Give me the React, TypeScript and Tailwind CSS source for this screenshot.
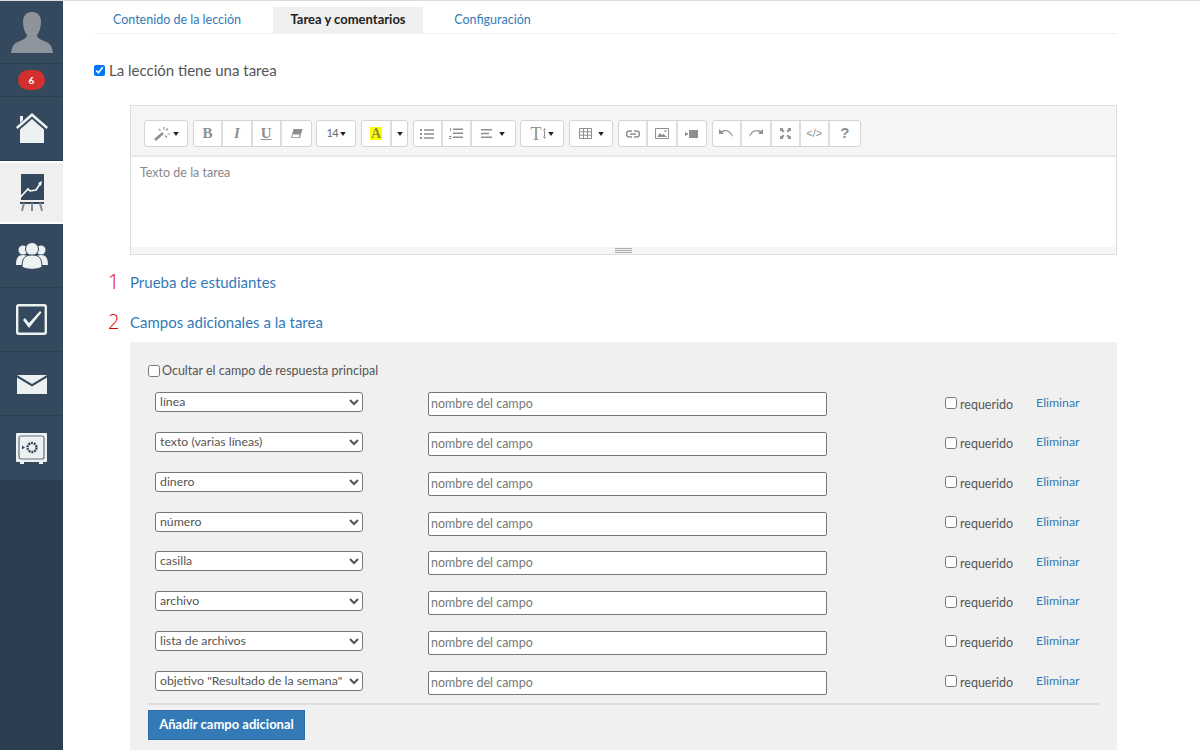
import React from "react";

const G = "#8f8f8f";

function Caret({ className = "" }: { className?: string }) {
  return (
    <svg width="6" height="4" viewBox="0 0 7 5" className={className}>
      <path d="M0 0h7L3.500 5z" fill="#222" />
    </svg>
  );
}

function Ico({ w = 16, h = 14, children }: { w?: number; h?: number; children: React.ReactNode }) {
  return (
    <svg width={w} height={h} viewBox={`0 0 ${w} ${h}`} fill={G} stroke="none">
      {children}
    </svg>
  );
}

function Btn({ w, children, last }: { w: number; children: React.ReactNode; last?: boolean }) {
  return (
    <div
      style={{ width: w }}
      className={`flex h-full items-center justify-center gap-[2px] ${last ? "" : "border-r-2 border-[#dedede]"}`}
    >
      {children}
    </div>
  );
}

function Group({ children }: { children: React.ReactNode }) {
  return (
    <div className="flex h-[27px] items-center overflow-hidden rounded-[3px] border border-[#d4d4d4] bg-white">
      {children}
    </div>
  );
}

const Serif = "[font-family:'Liberation_Serif',serif]";

function Toolbar() {
  return (
    <div className="flex h-[51px] items-start gap-[4.700px] border-b-2 border-[#e8e8e8] bg-[#f5f5f5] pl-[13px] pt-[14px]">
      <Group>
        <Btn w={42} last>
          <svg width="17" height="14" viewBox="0 0 17 14" fill="none" stroke={G}>
            <path d="M1 13 9 6" strokeWidth="2.600" />
            <path d="M10 0v2.500M14 1.500l-2 2M16 7h-2.500M5 2l1.500 1.500M13 10.500l-2-2" strokeWidth="1.200" />
          </svg>
          <Caret />
        </Btn>
      </Group>
      <Group>
        <Btn w={29.500}><span className={`${Serif} text-[15px] font-bold text-[#8f8f8f]`}>B</span></Btn>
        <Btn w={29.500}><span className={`${Serif} text-[15px] font-bold italic text-[#8f8f8f]`}>I</span></Btn>
        <Btn w={29}><span className={`${Serif} text-[15px] font-bold text-[#8f8f8f] underline`}>U</span></Btn>
        <Btn w={29} last>
          <Ico w={13} h={11}><path d="M3.500 1H12.500L10 10H1z" /><path d="M2.800 6.500h6.800L9 9.300H2z" fill="#fff" /></Ico>
        </Btn>
      </Group>
      <Group>
        <Btn w={38} last>
          <span className="text-[11px] tracking-[-0.500px] text-[#666]">14</span>
          <Caret />
        </Btn>
      </Group>
      <Group>
        <Btn w={30}>
          <span className={`${Serif} bg-[#ffff00] px-[1px] text-[14px] leading-[13px] font-bold text-[#8f8f40]`}>A</span>
        </Btn>
        <Btn w={15} last><Caret /></Btn>
      </Group>
      <Group>
        <Btn w={29}>
          <Ico w={14} h={10}>
            <path d="M0 0h2v2H0zM0 4h2v2H0zM0 8h2v2H0zM4 .3h10v1.400H4zM4 4.300h10v1.400H4zM4 8.300h10v1.400H4z" />
          </Ico>
        </Btn>
        <Btn w={29}>
          <Ico w={14} h={11}>
            <path d="M1 0h1v3H1zM0 8h2.500v1H0zM0 10h2.500v1H0zM4 .5h10v1.400H4zM4 4.500h10v1.400H4zM4 8.500h10v1.400H4z" />
          </Ico>
        </Btn>
        <Btn w={43} last>
          <Ico w={11} h={9}><path d="M0 0h11v1.500H0zM0 3.700h8v1.500H0zM0 7.400h11v1.500H0z" /></Ico>
          <span className="w-[3px]" />
          <Caret />
        </Btn>
      </Group>
      <Group>
        <Btn w={42} last>
          <span className={`${Serif} text-[18px] leading-none text-[#8f8f8f]`}>T</span>
          <svg width="3" height="11" viewBox="0 0 3 11"><path d="M1.500 0 3 2.500H0zM1 3h1v5H1zM1.500 11 0 8.500h3z" fill={G} /></svg>
          <Caret />
        </Btn>
      </Group>
      <Group>
        <Btn w={42} last>
          <svg width="13" height="11" viewBox="0 0 13 11" fill="none" stroke={G}>
            <path d="M.5.500h12v10H.5zM.5 3.800h12M.5 7.200h12M4.500.5v10M8.500.5v10" />
          </svg>
          <span className="w-[2px]" />
          <Caret />
        </Btn>
      </Group>
      <Group>
        <Btn w={29.500}>
          <svg width="14" height="8" viewBox="0 0 14 8" fill="none" stroke={G} strokeWidth="1.500">
            <path d="M6 1H3.500a2.800 2.800 0 0 0 0 6H6M8 1h2.500a2.800 2.800 0 0 1 0 6H8M4 4h6" />
          </svg>
        </Btn>
        <Btn w={29.500}>
          <svg width="14" height="11" viewBox="0 0 14 11" fill="none" stroke={G}>
            <path d="M.5.500h13v10H.5z" />
            <path d="M2 9l3-4 2 2 1.500-1L12 9z" fill={G} stroke="none" />
            <circle cx="10.500" cy="3" r="1" fill={G} stroke="none" />
          </svg>
        </Btn>
        <Btn w={28} last>
          <Ico w={13} h={8}><path d="M4 0h9v8H4zM0 2l3 1.500v1L0 6z" /></Ico>
        </Btn>
      </Group>
      <Group>
        <Btn w={29.500}>
          <Ico w={14} h={9}><path d="M0 0v5h5L3.300 3.500C6 1.500 10 2 12 6l2 2C13 3 8-1 2.300 2z" /></Ico>
        </Btn>
        <Btn w={29.500}>
          <Ico w={14} h={9}><path d="M14 0v5H9l1.700-1.500C8 1.500 4 2 2 6L0 8C1 3 6-1 11.700 2z" /></Ico>
        </Btn>
        <Btn w={29}>
          <Ico w={11} h={11}>
            <path d="M0 0h3.500L2.500 1 4.500 3l-1.500 1.500L1 2.500 0 3.500zM11 0v3.500l-1-1L8 4.500 6.500 3l2-2-1-1zM0 11V7.500l1 1 2-2L4.500 8l-2 2 1 1zM11 11H7.500l1-1-2-2L8 6.500l2 2 1-1z" />
          </Ico>
        </Btn>
        <Btn w={29.500}>
          <span className="[font-family:'Liberation_Sans',sans-serif] text-[11px] text-[#8f8f8f]">&lt;/&gt;</span>
        </Btn>
        <Btn w={29.500} last>
          <span className="[font-family:'Liberation_Sans',sans-serif] text-[15px] font-bold text-[#8f8f8f]">?</span>
        </Btn>
      </Group>
    </div>
  );
}

function NavItem({ children, last }: { children: React.ReactNode; last?: boolean }) {
  return (
    <div className={`flex h-[64px] items-center justify-center border-b border-[#2c3e50] ${last ? "border-b-0" : ""}`}>
      {children}
    </div>
  );
}

function Sidebar() {
  const L = "#eef1f2";
  return (
    <div className="flex w-[63px] shrink-0 flex-col self-stretch bg-[#2c3e50]">
      <div className="bg-[#34495e]">
        <div className="flex h-[63px] items-start justify-center border-b border-[#2c3e50] pt-[11px]">
          <svg width="42" height="41" viewBox="0 0 42 41" fill="#8d949c">
            <path d="M21 0c6 0 9 4 9 10 0 5-1.500 10-4 13 0 3 3 4 7 6 5 2 8 4 9 12H0c1-8 4-10 9-12 4-2 7-3 7-6-2.500-3-4-8-4-13 0-6 3-10 9-10z" />
          </svg>
        </div>
        <div className="flex h-[33px] items-center justify-center border-b border-[#2c3e50]">
          <div className="flex h-[20px] w-[27px] items-center justify-center rounded-[10px] bg-[#d32f2f] text-[10px] font-bold text-white">
            6
          </div>
        </div>
        <NavItem>
          <svg width="32" height="31" viewBox="0 0 32 31" fill={L}>
            <path d="M4 3h3v4L4 10z" />
            <path d="M16 0 32 14l-1.500 2L16 3.500 1.500 16 0 14z" />
            <path d="M16 6 28 16.500V30H4V16.500z" />
          </svg>
        </NavItem>
        <div className="flex h-[63px] items-center justify-center border-y-2 border-y-white bg-[#efefef]">
          <svg width="26" height="37" viewBox="0 0 26 37">
            <path d="M2 0h23v26H2z" fill="#34495e" />
            <path d="M1 29h24" stroke="#34495e" strokeWidth="2" />
            <path d="M5 29 3 37M13 29v8M21 29l2 8" stroke="#7f8c99" strokeWidth="2" fill="none" />
            <path d="M1.500 23 9 15l2 2 6-1 4-6" stroke="#fff" strokeWidth="1.600" fill="none" />
            <path d="M23 7l-1 5-3-3z" fill="#fff" />
          </svg>
        </div>
        <NavItem>
          <svg width="32" height="28" viewBox="0 0 32 28" fill={L}>
            <circle cx="7" cy="8" r="4.500" />
            <circle cx="25" cy="8" r="4.500" />
            <path d="M0 23c0-7 2-10 7-10s7 3 7 10zM18 23c0-7 2-10 7-10s7 3 7 10z" />
            <circle cx="16" cy="7" r="6.500" stroke="#34495e" />
            <path d="M6 25c0-9 3-12 10-12s10 3 10 12c-5 3-15 3-20 0z" stroke="#34495e" />
          </svg>
        </NavItem>
        <NavItem>
          <svg width="31" height="31" viewBox="0 0 31 31" fill="none">
            <rect x="1.200" y="1.200" width="28.600" height="28.600" rx="1.500" stroke={L} strokeWidth="2.400" />
            <path d="M7 16l2-2 4 5L24 7l1.500 1.500L13 24z" fill={L} />
          </svg>
        </NavItem>
        <NavItem>
          <svg width="30" height="19" viewBox="0 0 30 19" fill={L} className="mt-[1px]">
            <path d="M0 0 15 9 30 0z" />
            <path d="M0 2.500 15 11.500 30 2.500V19H0z" />
          </svg>
        </NavItem>
        <NavItem last>
          <svg width="31" height="31" viewBox="0 0 31 31" fill="none">
            <path d="M1 0h29a1 1 0 0 1 1 1v27a1 1 0 0 1-1 1h-3v2h-4v-2H8v2H4v-2H1a1 1 0 0 1-1-1V1a1 1 0 0 1 1-1z" fill={L} />
            <rect x="3" y="3" width="25" height="23" rx="2" stroke="#5e7082" strokeWidth="1.200" />
            <circle cx="16" cy="14.500" r="4.500" stroke="#34495e" strokeWidth="2.400" strokeDasharray="2 0.800" />
            <path d="M6 12.500l3 2-3 2z" fill="#34495e" />
          </svg>
        </NavItem>
      </div>
    </div>
  );
}

const rows = [
  "línea",
  "texto (varias líneas)",
  "dinero",
  "número",
  "casilla",
  "archivo",
  "lista de archivos",
  'objetivo "Resultado de la semana"',
];

function FieldRow({ label }: { label: string }) {
  return (
    <div className="flex h-[39.750px] items-start">
      <select
        defaultValue={label}
        className="ml-[7px] h-[20px] w-[208px] rounded-[3px] border border-[#767676] bg-white pb-[3px] text-[12.300px] leading-[16px] text-[#555]"
      >
        <option>{label}</option>
      </select>
      <input
        placeholder="nombre del campo"
        className="ml-[65px] h-[24px] w-[399px] rounded-[2px] border border-[#767676] bg-white px-[2px] pb-[1px] text-[12.500px] text-[#555] placeholder:text-[#777]"
      />
      <label className="ml-[118px] flex h-[24px] items-center text-[12.500px] text-[#555]">
        <input type="checkbox" className="m-0 mb-[3px] h-[12px] w-[12px]" />
        <span className="ml-[3px] mt-[1px]">requerido</span>
      </label>
      <a className="ml-[23px] flex h-[21px] items-center text-[12.300px] text-[#337ab7]">Eliminar</a>
    </div>
  );
}

const Digit = "w-[36px] pl-[14px] text-[20px] font-light text-[#e00000] [font-family:'Open_Sans',sans-serif]";

export default function App() {
  return (
    <div className="flex h-[750px] w-[1200px] overflow-hidden border-t border-[#dddddd] bg-white [font-family:Lato,sans-serif]">
      <Sidebar />
      <main className="flex-1 pl-[31px] pr-[83px]">
        <nav className="flex h-[33px] items-end border-b border-[#f0f0f0] pl-[1px] text-[12.500px]">
          <a className="flex h-[26px] w-[178px] items-center justify-center pr-[14px] text-[#337ab7]">Contenido de la lección</a>
          <a className="flex h-[26px] w-[150px] items-center justify-center bg-[#efefef] text-[13px] font-bold text-[#222]">
            Tarea y comentarios
          </a>
          <a className="flex h-[26px] w-[139px] items-center justify-center text-[#337ab7]">Configuración</a>
        </nav>

        <label className="mt-[27px] flex h-[18px] items-center text-[15px] text-[#555]">
          <input type="checkbox" defaultChecked className="m-0 h-[11px] w-[11px]" />
          <span className="ml-[4px]">La lección tiene una tarea</span>
        </label>

        <div className="ml-[36px] mt-[26px] border border-[#dddddd]">
          <Toolbar />
          <div className="h-[90px] px-[9px] pt-[7px] text-[12.500px] text-[#888]">Texto de la tarea</div>
          <div className="flex h-[7px] flex-col items-center justify-center gap-[1px] bg-[#f5f5f5]">
            <div className="h-[1px] w-[17px] bg-[#aaa]" />
            <div className="h-[1px] w-[17px] bg-[#aaa]" />
            <div className="h-[1px] w-[17px] bg-[#aaa]" />
          </div>
        </div>

        <div className="mt-[15px] flex h-[24px] items-center">
          <span className={Digit}>1</span>
          <a className="text-[15px] text-[#337ab7]">Prueba de estudiantes</a>
        </div>
        <div className="mt-[16px] flex h-[24px] items-center">
          <span className={Digit}>2</span>
          <a className="text-[15px] text-[#337ab7]">Campos adicionales a la tarea</a>
        </div>

        <section className="ml-[36px] mt-[8px] h-[410px] bg-[#f0f0f0] px-[18px] pt-[21px]">
          <label className="flex h-[16px] items-center text-[12.500px] text-[#555]">
            <input type="checkbox" className="m-0 mb-[1px] h-[12px] w-[12px]" />
            <span className="ml-[2px]">Ocultar el campo de respuesta principal</span>
          </label>
          <div className="mt-[13.400px]">
            {rows.map((r) => (
              <FieldRow key={r} label={r} />
            ))}
          </div>
          <div className="-mt-[7px] h-[2px] bg-[#dddddd]" />
          <button className="mt-[4.500px] h-[30px] w-[157px] border border-[#2e6da4] bg-[#337ab7] text-[13px] font-bold text-white">
            Añadir campo adicional
          </button>
        </section>
      </main>
    </div>
  );
}
